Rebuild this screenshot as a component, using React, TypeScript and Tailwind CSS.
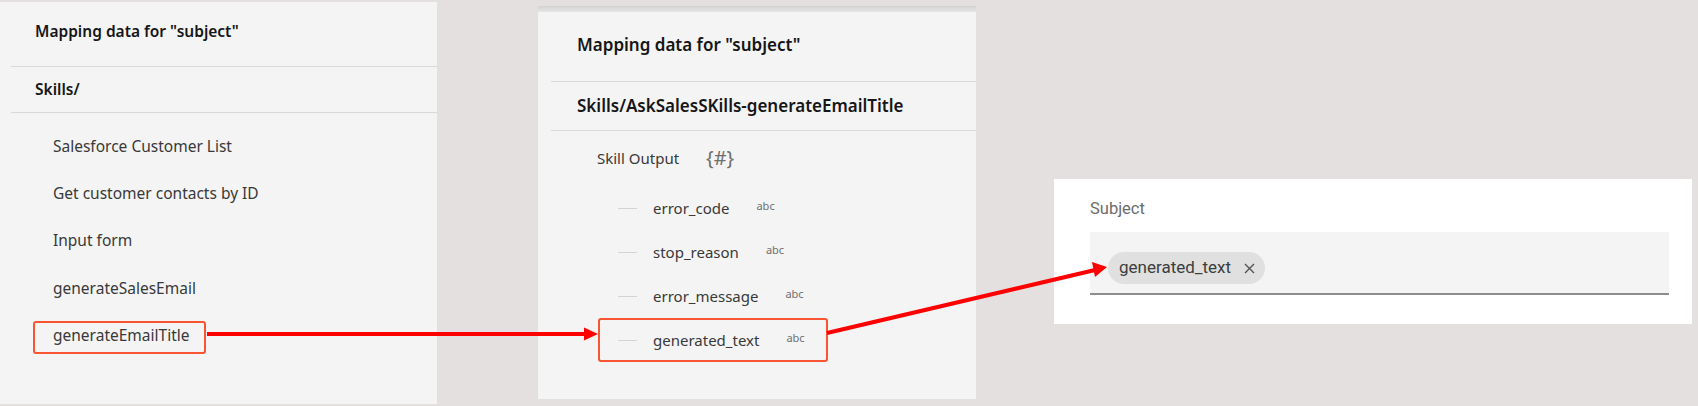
import React from "react";

const plex = { fontFamily: '"Noto Sans", "Open Sans", sans-serif' };
const roboto = { fontFamily: "Roboto, Arial, sans-serif" };

const skills = [
  "Salesforce Customer List",
  "Get customer contacts by ID",
  "Input form",
  "generateSalesEmail",
  "generateEmailTitle",
];

const outputs = ["error_code", "stop_reason", "error_message", "generated_text"];

function SkillsPanel() {
  return (
    <div className="mt-[2px] h-[402px] w-[437px] shrink-0 bg-[#f4f4f4]" style={plex}>
      <div className="flex h-[64px] items-center pb-[4px] pl-[35px] text-[15.5px] font-semibold text-[#161616]">
        Mapping data for "subject"
      </div>
      <div className="ml-[11px] h-px bg-[#d9d9d9]" />
      <div className="flex h-[45px] items-center pl-[35px] text-[15.5px] font-semibold text-[#161616]">
        Skills/
      </div>
      <div className="ml-[11px] h-px bg-[#d9d9d9]" />
      {/* liste des skills */}
      <div className="flex flex-col gap-[14.25px] pt-[19px]">
        {skills.map((name, i) => (
          <div
            key={name}
            className={`ml-[33px] flex h-[33px] w-fit items-center rounded-[3px] border-2 pb-[4px] pl-[18px] pr-[15px] text-[15.5px] text-[#393939] ${
              i === skills.length - 1 ? "border-[#fa5533]" : "border-transparent"
            }`}
          >
            {name}
          </div>
        ))}
      </div>
    </div>
  );
}

function OutputPanel() {
  return (
    <div className="ml-[101px] mt-[6px] h-[393px] w-[438px] shrink-0 bg-[#f4f4f4]" style={plex}>
      <div className="h-[6px] bg-gradient-to-b from-[#d2d2d2] to-[#e6e6e6]" />
      <div className="flex h-[69px] items-center pb-[3px] pl-[39px] text-[17px] font-semibold text-[#161616]">
        Mapping data for "subject"
      </div>
      <div className="ml-[13px] h-px bg-[#d9d9d9]" />
      <div className="flex h-[48px] items-center pl-[39px] text-[17px] font-semibold text-[#161616]">
        Skills/AskSalesSKills-generateEmailTitle
      </div>
      <div className="ml-[13px] h-px bg-[#d9d9d9]" />
      <div className="mt-[7px] flex h-[40px] items-center pl-[59px] text-[15px] text-[#393939]">
        <span>Skill Output</span>
        <span className="ml-[27px] text-[20px] leading-none text-[#6f6f6f]">{"{#}"}</span>
      </div>
      <div className="mt-[8px] flex flex-col">
        {outputs.map((name, i) => (
          <div
            key={name}
            className={`ml-[60px] flex h-[44px] w-fit items-center rounded-[3px] border-2 pl-[18px] pr-[21px] ${
              i === outputs.length - 1 ? "border-[#fa5533]" : "border-transparent"
            }`}
          >
            <span className="h-px w-[19px] bg-[#d4d4d4]" />
            <span className="ml-[16px] text-[15px] text-[#393939]">{name}</span>
            <span className="ml-[27px] -translate-y-[2px] text-[11px] text-[#6f6f6f]">abc</span>
          </div>
        ))}
      </div>
    </div>
  );
}

function SubjectField() {
  return (
    <div
      className="ml-[78px] mt-[179px] h-[145px] w-[638px] shrink-0 bg-white pl-[36px] pr-[23px] pt-[20px]"
      style={roboto}
    >
      <div className="text-[16.5px] leading-[20px] text-[#6b6b6b]">Subject</div>
      <div className="mt-[13px] h-[63px] w-[579px] border-b-2 border-[#8d8d8d] bg-[#f4f4f4] pl-[18px] pt-[20px]">
        <div className="flex h-[32px] w-fit items-center rounded-full bg-[#e0e0e0] pl-[11px] pr-[10px]">
          <span className="text-[17px] text-[#3d3d3d]">generated_text</span>
          <svg className="ml-[13px]" width="11" height="11" viewBox="0 0 11 11">
            <path d="M1 1L10 10M10 1L1 10" stroke="#525252" strokeWidth="1.4" />
          </svg>
        </div>
      </div>
    </div>
  );
}

export default function App() {
  return (
    <div className="relative h-[406px] w-[1698px] overflow-hidden bg-[#e5e0e0]">
      <div className="flex items-start">
        <SkillsPanel />
        <OutputPanel />
        <SubjectField />
      </div>
      {/* flèches rouges */}
      <svg className="pointer-events-none absolute inset-0" width="1698" height="406">
        <line x1="207" y1="334" x2="587" y2="334" stroke="#ff0000" strokeWidth="4" />
        <polygon points="584,327.5 598,334 584,340.5" fill="#ff0000" />
        <line x1="827" y1="333" x2="1095" y2="270" stroke="#ff0000" strokeWidth="4" />
        <polygon points="1092,262 1107,267 1095,277" fill="#ff0000" />
      </svg>
    </div>
  );
}
